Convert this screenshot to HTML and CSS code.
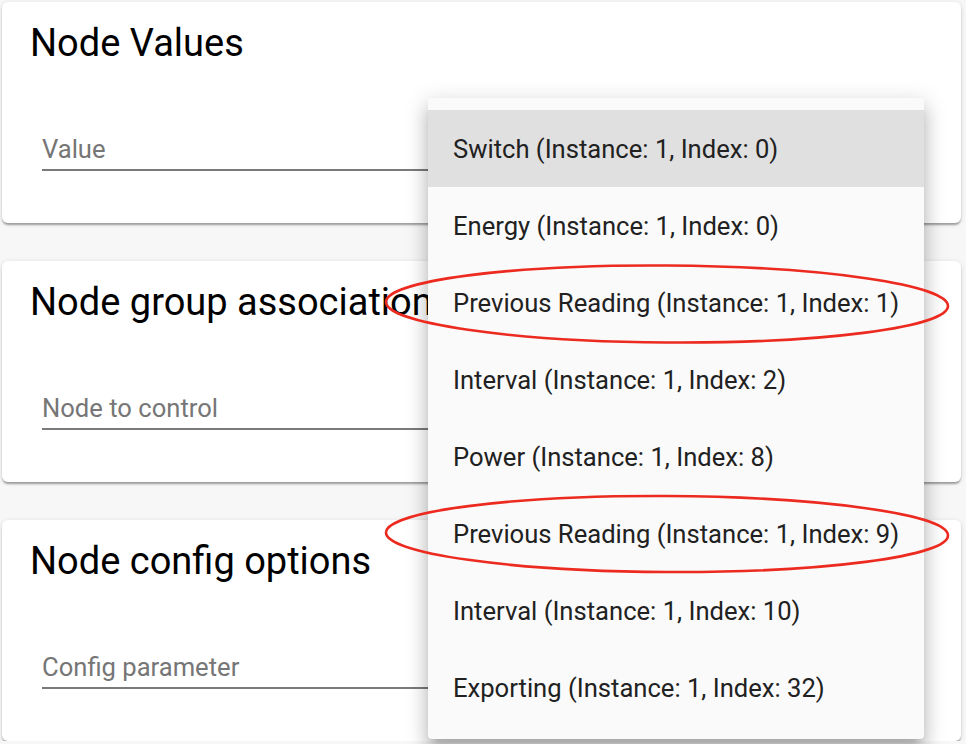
FILE: index.html
```html
<!DOCTYPE html>
<html lang="en">
<head>
    <meta charset="UTF-8">
    <meta name="viewport" content="width=device-width, initial-scale=1.0">
    <title>Node Settings</title>
    <link rel="stylesheet" href="styles.css">
</head>
<body>
    <div class="page">
        <div class="card">
            <h2 class="card-title">Node Values</h2>
            <div class="field">
                <span class="placeholder">Value</span>
            </div>
        </div>

        <div class="card">
            <h2 class="card-title">Node group association</h2>
            <div class="field">
                <span class="placeholder">Node to control</span>
            </div>
        </div>

        <div class="card">
            <h2 class="card-title">Node config options</h2>
            <div class="field">
                <span class="placeholder">Config parameter</span>
            </div>
        </div>
    </div>

    <!-- open select panel -->
    <div class="menu">
        <div class="menu-item active">Switch (Instance: 1, Index: 0)</div>
        <div class="menu-item">Energy (Instance: 1, Index: 0)</div>
        <div class="menu-item">Previous Reading (Instance: 1, Index: 1)</div>
        <div class="menu-item">Interval (Instance: 1, Index: 2)</div>
        <div class="menu-item">Power (Instance: 1, Index: 8)</div>
        <div class="menu-item">Previous Reading (Instance: 1, Index: 9)</div>
        <div class="menu-item">Interval (Instance: 1, Index: 10)</div>
        <div class="menu-item">Exporting (Instance: 1, Index: 32)</div>
    </div>

    <!-- red annotation marks -->
    <svg class="marks" width="966" height="744" viewBox="0 0 966 744">
        <ellipse cx="667" cy="304" rx="281" ry="38.5" transform="rotate(0.4 667 304)" />
        <ellipse cx="667" cy="534" rx="281" ry="38" transform="rotate(0.3 667 534)" />
    </svg>
</body>
</html>
```

FILE: styles.css
```css
body {
    margin: 0;
    padding: 2px 5px 0 2px;
    background-color: #f7f7f7;
    font-family: Roboto, "Noto Sans", sans-serif;
    overflow: hidden;
}

.page {
    display: flex;
    flex-direction: column;
    gap: 38px;
}

.card {
    height: 221px;
    box-sizing: border-box;
    padding: 17px 40px 0 28px;
    background-color: white;
    border-radius: 6px;
    box-shadow: 0 3px 2px -1px rgba(0,0,0,0.2), 0 2px 2px rgba(0,0,0,0.14), 0 1px 5px rgba(0,0,0,0.12);
}

.card-title {
    margin: 0;
    font-size: 38px;
    line-height: 48px;
    font-weight: 400;
    color: #000;
}

.field {
    margin: 66px 0 0 12px;
    padding-bottom: 4px;
    border-bottom: 2px solid #7a7a7a;
}

.placeholder {
    display: block;
    font-size: 25.6px;
    line-height: 32px;
    color: #767676;
}

.menu {
    position: absolute;
    left: 428px;
    top: 98px;
    width: 496px;
    padding: 12px 0 13px;
    background-color: #fafafa;
    border-radius: 4px;
    box-shadow: 0 8px 8px -5px rgba(0,0,0,0.2), 0 13px 16px 2px rgba(0,0,0,0.14), 0 5px 22px 4px rgba(0,0,0,0.12);
}

.menu-item {
    height: 77px;
    line-height: 79px;
    padding: 0 25px;
    font-size: 25.6px;
    color: #212121;
    white-space: nowrap;
}

.menu-item.active {
    background-color: #e0e0e0;
}

.marks {
    position: absolute;
    left: 0;
    top: 0;
    pointer-events: none;
}

.marks ellipse {
    fill: none;
    stroke: #ec2a1f;
    stroke-width: 2.6;
}
```
